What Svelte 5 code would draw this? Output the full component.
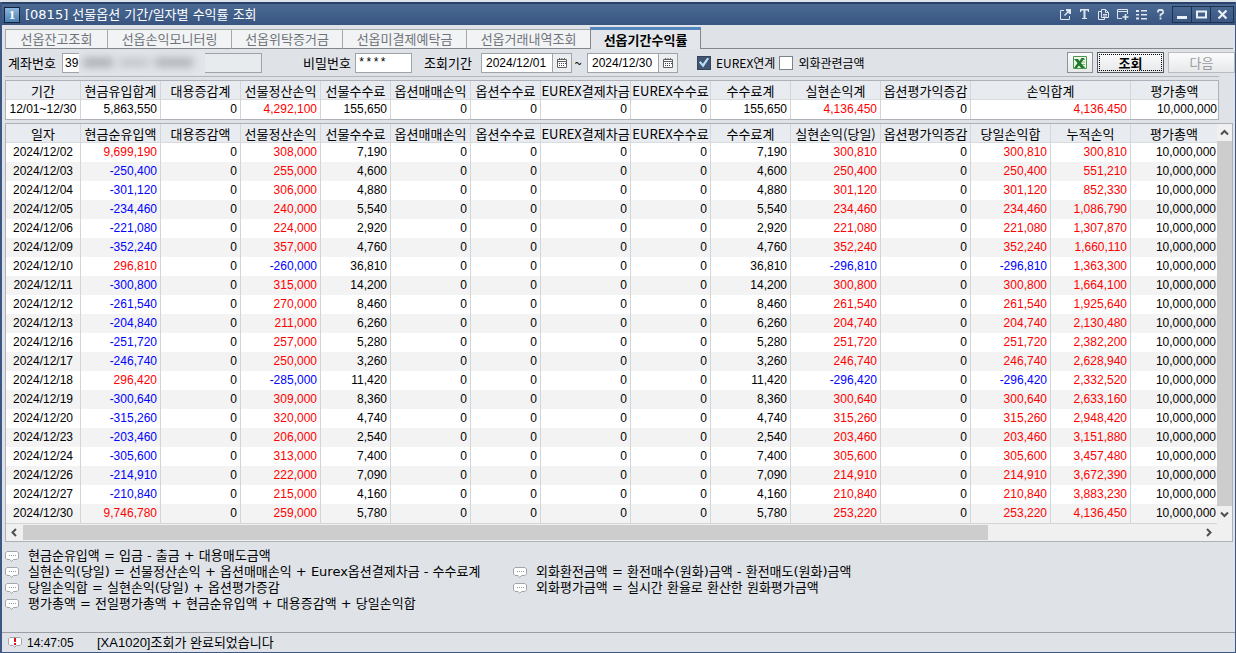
<script>
	const tabs = [
		{ label: '선옵잔고조회', width: 102 },
		{ label: '선옵손익모니터링', width: 124 },
		{ label: '선옵위탁증거금', width: 111 },
		{ label: '선옵미결제예탁금', width: 124 },
		{ label: '선옵거래내역조회', width: 124 },
		{ label: '선옵기간수익률', width: 111 }
	];
	let activeTab = $state(5);

	let account = $state('39');
	let password = $state('****');
	let fromDate = $state('2024/12/01');
	let toDate = $state('2024/12/30');
	let eurex = $state(true);
	let foreign = $state(false);

	const colWidths = [75, 80, 80, 80, 70, 80, 70, 90, 80, 80, 90, 90, 80, 80];

	const summaryHeads = ['기간', '현금유입합계', '대용증감계', '선물정산손익', '선물수수료', '옵션매매손익', '옵션수수료', 'EUREX결제차금', 'EUREX수수료', '수수료계', '실현손익계', '옵션평가익증감', '손익합계', '평가총액'];
	const summary = ['5,863,550', '0', '4,292,100', '155,650', '0', '0', '0', '0', '155,650', '4,136,450', '0', '4,136,450', '10,000,000'];
	const summaryRed = [2, 9, 11];

	const heads = ['일자', '현금순유입액', '대용증감액', '선물정산손익', '선물수수료', '옵션매매손익', '옵션수수료', 'EUREX결제차금', 'EUREX수수료', '수수료계', '실현손익(당일)', '옵션평가익증감', '당일손익합', '누적손익', '평가총액'];

	// date, cash in, futures p/l, fee, day p/l, cumulative p/l
	const days = [
		['12/02', 9699190, 308000, 7190, 300810, 300810],
		['12/03', -250400, 255000, 4600, 250400, 551210],
		['12/04', -301120, 306000, 4880, 301120, 852330],
		['12/05', -234460, 240000, 5540, 234460, 1086790],
		['12/06', -221080, 224000, 2920, 221080, 1307870],
		['12/09', -352240, 357000, 4760, 352240, 1660110],
		['12/10', 296810, -260000, 36810, -296810, 1363300],
		['12/11', -300800, 315000, 14200, 300800, 1664100],
		['12/12', -261540, 270000, 8460, 261540, 1925640],
		['12/13', -204840, 211000, 6260, 204740, 2130480],
		['12/16', -251720, 257000, 5280, 251720, 2382200],
		['12/17', -246740, 250000, 3260, 246740, 2628940],
		['12/18', 296420, -285000, 11420, -296420, 2332520],
		['12/19', -300640, 309000, 8360, 300640, 2633160],
		['12/20', -315260, 320000, 4740, 315260, 2948420],
		['12/23', -203460, 206000, 2540, 203460, 3151880],
		['12/24', -305600, 313000, 7400, 305600, 3457480],
		['12/26', -214910, 222000, 7090, 214910, 3672390],
		['12/27', -210840, 215000, 4160, 210840, 3883230],
		['12/30', 9746780, 259000, 5780, 253220, 4136450]
	];

	const signed = [0, 2, 9, 11, 12];
	const rows = days.map(([date, cash, fut, fee, pnl, cum]) => ({
		date: '2024/' + date,
		cells: [cash, 0, fut, fee, 0, 0, 0, 0, fee, pnl, 0, pnl, cum, 10000000]
	}));

	function fmt(n) {
		return n.toLocaleString('en-US');
	}

	function tone(n, i) {
		if (!signed.includes(i)) return '';
		return n < 0 ? 'down' : 'up';
	}

	const leftNotes = [
		'현금순유입액 = 입금 - 출금 + 대용매도금액',
		'실현손익(당일) = 선물정산손익 + 옵션매매손익 + Eurex옵션결제차금 - 수수료계',
		'당일손익합 = 실현손익(당일) + 옵션평가증감',
		'평가총액 = 전일평가총액 + 현금순유입액 + 대용증감액 + 당일손익합'
	];
	const rightNotes = [
		'외화환전금액 = 환전매수(원화)금액 - 환전매도(원화)금액',
		'외화평가금액 = 실시간 환율로 환산한 원화평가금액'
	];
</script>

{#snippet bubble(alert)}
	<svg class="bubble" width="14" height="13" viewBox="0 0 14 13" aria-hidden="true">
		<path d="M2 1.500h10l1.500 1.500v5l-1.500 1.500H8.500L6.500 11.500 5 9.500H2L.500 8V3z" fill="#fff" stroke="#a3a5a8" />
		{#if alert}
			<path d="M6 2h2v4H6zM6 7h2v2H6z" fill="#e01515" />
		{:else}
			<path d="M4 5h1v1H4zM6 5h1v1H6zM8 5h1v1H8zM10 5h1v1h-1z" fill="#999" />
		{/if}
	</svg>
{/snippet}

{#snippet calendar()}
	<svg width="12" height="12" viewBox="0 0 12 12" aria-hidden="true">
		<path d="M1.500 2.500h9v8h-9z" fill="#fff" stroke="#606060" />
		<path d="M1 4.500h10M3.500 1v2M6 1v2M8.500 1v2" fill="none" stroke="#606060" />
		<path d="M3 6h1v1H3zM5 6h1v1H5zM7 6h1v1H7zM9 6h1v1H9zM3 8h1v1H3zM5 8h1v1H5zM7 8h1v1H7z" fill="#444" />
	</svg>
{/snippet}

{#snippet arrow(d)}
	<svg width="9" height="9" viewBox="0 0 9 9" aria-hidden="true">
		<path {d} fill="none" stroke="#505050" stroke-width="2" />
	</svg>
{/snippet}

<div class="desk"></div>
<div class="window">
	<header class="titlebar">
		<span class="badge">1</span>
		<h1>[0815] 선물옵션 기간/일자별 수익률 조회</h1>
		<div class="tools">
			<button aria-label="새창">
				<svg width="11" height="11" viewBox="0 0 11 11"><path d="M4 1.500H.500v9h9V7" fill="none" stroke="#dfe6ee" /><path d="M4.500 6.500L9 2" stroke="#dfe6ee" stroke-width="1.500" /><path d="M6 0h5v5H9.500L6 1.500z" fill="#dfe6ee" /></svg>
			</button>
			<button aria-label="글꼴">
				<svg width="11" height="11" viewBox="0 0 11 11"><path d="M1 0h9v3H9L8.500 1.500H6.500V9H8v1H3V9h1.500V1.500h-2L2 3H1z" fill="#dfe6ee" /></svg>
			</button>
			<button aria-label="복사">
				<svg width="11" height="11" viewBox="0 0 11 11"><path d="M3.500.500h4l3 3v5h-7zM7.500.500v3h3M3 2.500H.500v8h6V9M5 5.500h4M5 7h4" fill="none" stroke="#dfe6ee" /></svg>
			</button>
			<button aria-label="추가">
				<svg width="12" height="11" viewBox="0 0 12 11"><path d="M5 9.500H.500v-9h10V5M1 2.500h9" fill="none" stroke="#dfe6ee" /><path d="M8.500 5v6M5.500 8h6" stroke="#dfe6ee" stroke-width="1.600" /></svg>
			</button>
			<button aria-label="목록">
				<svg width="11" height="11" viewBox="0 0 11 11"><path d="M0 1h3v2H0zM5 1h6v1.500H5zM0 5h3v1.500H0zM5 5h6v1.500H5zM0 8.500h3v2H0zM5 9h6v1.500H5z" fill="#dfe6ee" /></svg>
			</button>
			<button aria-label="도움말">
				<svg width="11" height="11" viewBox="0 0 11 11"><path d="M3 3.500V2L4 1h3l1 1v2L5.500 5.800V7.500M5.500 8.500v2" fill="none" stroke="#dfe6ee" stroke-width="1.800" /></svg>
			</button>
		</div>
		<div class="winbtns">
			<button aria-label="최소화">
				<svg width="11" height="11" viewBox="0 0 11 11"><path d="M0 7h10v3H0z" fill="#e9eff6" /></svg>
			</button>
			<button aria-label="최대화">
				<svg width="11" height="11" viewBox="0 0 11 11"><path d="M1 2.500h9v6H1z" fill="none" stroke="#e9eff6" stroke-width="2" /></svg>
			</button>
			<button class="close" aria-label="닫기">
				<svg width="11" height="11" viewBox="0 0 11 11"><path d="M1.500 1.500l8 8M9.500 1.500l-8 8" fill="none" stroke="#e9eff6" stroke-width="2.200" /></svg>
			</button>
		</div>
	</header>

	<nav class="tabs">
		{#each tabs as tab, i}
			<button class="tab" class:active={activeTab === i} style="width: {tab.width}px" onclick={() => (activeTab = i)}>{tab.label}</button>
		{/each}
		<span class="rest"></span>
	</nav>

	<form class="filter" onsubmit={(e) => e.preventDefault()}>
		<label for="account">계좌번호</label>
		<div class="account">
			<input id="account" bind:value={account} />
			<span class="mask"><i></i><i></i><i></i></span>
		</div>
		<label for="password">비밀번호</label>
		<input id="password" class="password" bind:value={password} />
		<label for="from">조회기간</label>
		<div class="date">
			<input id="from" bind:value={fromDate} />
			<button type="button" aria-label="시작일 선택">{@render calendar()}</button>
		</div>
		<span class="tilde">~</span>
		<div class="date">
			<input aria-label="종료일" bind:value={toDate} />
			<button type="button" aria-label="종료일 선택">{@render calendar()}</button>
		</div>
		<label class="check first"><input type="checkbox" bind:checked={eurex} />EUREX연계</label>
		<label class="check"><input type="checkbox" bind:checked={foreign} />외화관련금액</label>
		<div class="actions">
			<button type="button" class="btn excel" aria-label="엑셀">
				<svg width="14" height="14" viewBox="0 0 14 14">
					<path d="M.500.500h13v12H.500z" fill="#eef6ea" stroke="#4f9650" />
					<path d="M8 3.500h4M8 6h4M8 8.500h4M8 11h4" stroke="#7fb77d" />
					<path d="M1 3h4l1.500 2L8.500 2h3L8 7l4 5H8L6 9.500 4 12H1l3.500-5z" fill="#217a2b" />
				</svg>
			</button>
			<button type="submit" class="btn query">조회</button>
			<button type="button" class="btn next" disabled>다음</button>
		</div>
	</form>

	<div class="summary">
		<table>
			<colgroup>
				{#each colWidths as w}<col style="width: {w}px" />{/each}
				<col />
			</colgroup>
			<thead>
				<tr>
					{#each summaryHeads as head, i}
						<th colspan={i === 12 ? 2 : 1}>{head}</th>
					{/each}
				</tr>
			</thead>
			<tbody>
				<tr>
					<td class="day">12/01~12/30</td>
					{#each summary as value, i}
						<td class:up={summaryRed.includes(i)} colspan={i === 11 ? 2 : 1}>{value}</td>
					{/each}
				</tr>
			</tbody>
		</table>
	</div>

	<div class="grid">
		<table>
			<colgroup>
				{#each colWidths as w}<col style="width: {w}px" />{/each}
				<col />
			</colgroup>
			<thead>
				<tr>
					{#each heads as head}<th>{head}</th>{/each}
				</tr>
			</thead>
			<tbody>
				{#each rows as row}
					<tr>
						<td class="day">{row.date}</td>
						{#each row.cells as n, i}
							<td class={tone(n, i)}>{fmt(n)}</td>
						{/each}
					</tr>
				{/each}
			</tbody>
		</table>
		<div class="vbar">
			<button aria-label="위로">{@render arrow('M1 6.500L4.500 3 8 6.500')}</button>
			<div class="vthumb"></div>
			<button aria-label="아래로">{@render arrow('M1 2.500L4.500 6 8 2.500')}</button>
		</div>
		<div class="hbar">
			<button aria-label="왼쪽">{@render arrow('M6 1L2.500 4.500 6 8')}</button>
			<div class="htrack"><div class="hthumb"></div></div>
			<button aria-label="오른쪽">{@render arrow('M3 1l3.500 3.500L3 8')}</button>
		</div>
		<div class="corner"></div>
	</div>

	<section class="notes">
		<ul>
			{#each leftNotes as note}<li>{@render bubble(false)}{note}</li>{/each}
		</ul>
		<ul class="fx">
			{#each rightNotes as note}<li>{@render bubble(false)}{note}</li>{/each}
		</ul>
	</section>

	<footer>
		{@render bubble(true)}
		<span class="time">14:47:05</span>
		<span>[XA1020]조회가 완료되었습니다</span>
	</footer>
</div>

<style>
	:global(body) {
		background: #dfe3e8;
	}

	:global(#app) {
		min-height: 100vh;
		display: flex;
		flex-direction: column;
		font: 13px/18px "Noto Sans CJK KR", sans-serif;
		color: #000;
	}

	button,
	input {
		box-sizing: border-box;
		margin: 0;
		padding: 0;
		font: inherit;
		color: inherit;
		border-radius: 0;
	}

	svg {
		display: block;
		flex: none;
	}

	.desk {
		height: 2px;
		background: #dce4ea;
	}

	.window {
		flex: 1;
		display: flex;
		flex-direction: column;
		box-sizing: border-box;
		border: solid #3c5784;
		border-width: 0 1px 1px 2px;
		background: #dfe3e8;
		white-space: nowrap;
	}

	.titlebar {
		display: flex;
		align-items: center;
		height: 23px;
		box-sizing: border-box;
		padding: 0 1px 0 2px;
		border-top: 2px solid #2b4268;
		background: linear-gradient(#4a6a93, #3f5d88 60%, #3a5480);
		color: #fff;
	}

	.badge {
		width: 14px;
		height: 14px;
		border: 1px solid #14233c;
		background: linear-gradient(#8db6dc, #4b80b4);
		font: bold 13px/14px "Liberation Serif", serif;
		text-align: center;
	}

	h1 {
		flex: 1;
		margin: 0 0 0 5px;
		font: 13px/18px "DejaVu Sans", "Noto Sans CJK KR", sans-serif;
	}

	.tools,
	.winbtns {
		display: flex;
	}

	.tools button,
	.winbtns button {
		display: flex;
		align-items: center;
		justify-content: center;
		width: 19px;
		height: 17px;
		border: 0;
		background: none;
	}

	.winbtns {
		margin-left: 2px;
	}

	.winbtns button {
		border: 1px solid #1f3150;
		border-right-width: 0;
	}

	.winbtns .close {
		width: 24px;
		border-right-width: 1px;
	}

	.tabs {
		display: flex;
		align-items: flex-end;
		height: 24px;
		padding: 0 2px 0 3px;
	}

	.tab {
		height: 20px;
		border: 1px solid #a5a9ae;
		border-right-width: 0;
		border-bottom-color: #83878c;
		background: #f1f3f5;
		color: #70747a;
	}

	.tab.active {
		height: 22px;
		border: solid #83878c;
		border-width: 0 1px;
		border-top: 3px solid #5286bd;
		background: #e3e7eb;
		color: #000;
		font-weight: bold;
	}

	.rest {
		flex: 1;
		border-bottom: 1px solid #83878c;
	}

	.filter {
		display: flex;
		align-items: center;
		height: 27px;
		margin: 0 16px 0 3px;
		border-bottom: 1px solid #b4b8bd;
	}

	.filter label {
		width: 48px;
		margin: 0 6px 0 3px;
	}

	.filter input {
		height: 20px;
		border: 1px solid #9fa4aa;
		background: #fff;
		padding-left: 2px;
		font-size: 12px;
		font-family: "Liberation Sans", "Noto Sans CJK KR", sans-serif;
	}

	.account {
		position: relative;
		width: 200px;
		margin-right: 38px;
	}

	.account input {
		display: block;
		width: 100%;
		background: #e8ebee linear-gradient(#fff, #fff) no-repeat 0 0 / 16px 100%;
	}

	/* hides the rest of the account number */
	.mask {
		position: absolute;
		inset: -2px auto -2px 17px;
		width: 126px;
		display: flex;
		align-items: center;
		gap: 6px;
		padding-left: 4px;
		box-sizing: border-box;
		background: #e2e5e9;
	}

	.mask i {
		width: 30px;
		height: 9px;
		background: #a9acb0;
		filter: blur(4px);
	}

	.mask i:nth-child(2) {
		background: #c3c6ca;
	}

	.mask i:nth-child(3) {
		width: 38px;
		background: #aeb1b5;
	}

	.filter .password {
		width: 57px;
		margin: 0 9px 0 -2px;
		font-family: "Liberation Mono", monospace;
	}

	.date {
		display: flex;
		margin-left: 3px;
	}

	.filter .date input {
		width: 72px;
		padding-left: 4px;
	}

	.date button {
		display: flex;
		align-items: center;
		justify-content: center;
		width: 19px;
		border: 1px solid #9fa4aa;
		border-left: 0;
		background: #eceef0;
	}

	.tilde {
		width: 12px;
		text-align: center;
	}

	.filter .check {
		display: flex;
		align-items: center;
		width: auto;
		margin: 0 0 0 4px;
		font-size: 12px;
	}

	.filter .first {
		margin-left: 19px;
	}

	.check input {
		appearance: none;
		position: relative;
		width: 14px;
		height: 14px;
		margin-right: 5px;
		padding: 0;
		border-color: #7d838b;
	}

	.check input:checked {
		border-color: #34465e;
		background: #43566f;
	}

	.check input:checked::after {
		content: "";
		position: absolute;
		inset: 1px;
		background: #b9dcfa;
		clip-path: polygon(0 50%, 16% 36%, 38% 62%, 84% 0, 100% 12%, 42% 100%);
	}

	.actions {
		display: flex;
		gap: 4px;
		margin: 0 -16px 0 auto;
	}

	.btn {
		display: flex;
		align-items: center;
		justify-content: center;
		width: 67px;
		height: 21px;
		border: 1px solid #8d9197;
		background: linear-gradient(#fbfbfc, #e6e8ea);
	}

	.excel {
		width: 26px;
	}

	.query {
		border-color: #55585c;
		outline: 1px dotted #000;
		outline-offset: -3px;
		font-weight: bold;
	}

	.next {
		border-color: #b9bdc2;
		color: #999da2;
	}

	table {
		width: 100%;
		table-layout: fixed;
		border-collapse: separate;
		border-spacing: 0;
	}

	th,
	td {
		box-sizing: border-box;
		height: 19px;
		padding: 0;
		border-right: 1px solid #d3d6d9;
		line-height: 16px;
	}

	th {
		padding-top: 2px;
		background: #e8ebef;
		border-bottom: 1px solid #d9dcdf;
		font-weight: normal;
	}

	td {
		padding: 0 3px 2px 0;
		text-align: right;
		font-size: 12px;
		font-family: "Liberation Sans", sans-serif;
	}

	td.day {
		padding-right: 0;
		text-align: center;
	}

	td:last-child {
		padding-right: 1px;
	}

	th:last-child,
	td:last-child {
		border-right: 0;
	}

	.up {
		color: #f00;
	}

	.down {
		color: #00f;
	}

	.summary {
		margin: 3px 16px 3px 3px;
		border: 1px solid #aeb2b8;
		background: #fff;
	}

	.grid {
		display: grid;
		grid-template-columns: 1fr 15px;
		margin: 0 2px 0 3px;
		border: 1px solid #aeb2b8;
		background: #fff;
	}

	.grid tbody tr:nth-child(even) {
		background: #f3f3f3;
	}

	.vbar,
	.hbar,
	.corner {
		background: #f0f0f0;
	}

	.vbar,
	.hbar {
		display: flex;
	}

	.vbar {
		flex-direction: column;
	}

	.vbar button,
	.hbar button {
		display: flex;
		align-items: center;
		justify-content: center;
		width: 17px;
		height: 17px;
		border: 0;
		background: none;
	}

	.vbar button {
		width: 15px;
	}

	.vthumb {
		flex: 1;
		background: #cdcdcd;
	}

	.hbar {
		border-top: 1px solid #d3d6d9;
	}

	.htrack {
		flex: 1;
	}

	.hthumb {
		width: 82%;
		height: 15px;
		margin-top: 1px;
		background: #cdcdcd;
	}

	.notes {
		display: flex;
		padding: 6px 0 0 3px;
		font-family: "DejaVu Sans", "Noto Sans CJK KR", sans-serif;
	}

	ul {
		margin: 0;
		padding: 0;
		list-style: none;
		width: 508px;
	}

	.fx {
		padding-top: 16px;
	}

	li {
		display: flex;
		align-items: center;
		gap: 9px;
		height: 16px;
	}

	footer {
		display: flex;
		align-items: center;
		height: 19px;
		margin-top: auto;
		padding-left: 6px;
		border-top: 1px solid #9b9fa4;
		font-family: "Liberation Sans", "Noto Sans CJK KR", sans-serif;
	}

	.time {
		width: 70px;
		margin-left: 5px;
		font-size: 12px;
	}
</style>
